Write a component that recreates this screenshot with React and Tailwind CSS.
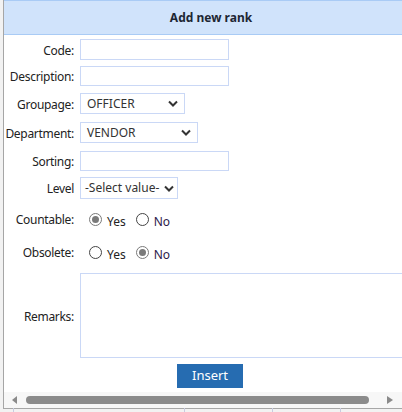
import React from 'react';

const font = { fontFamily: '"Noto Sans", "Open Sans", Arial, sans-serif' };

const Chevron = () => (
  <svg width="10" height="7" viewBox="0 0 10 7" className="shrink-0">
    <path d="M1 1.5 L5 5.5 L9 1.5" fill="none" stroke="#333" strokeWidth="2" />
  </svg>
);

const TextBox = ({ width = 'w-[149px]', height = 'h-[21px]' }) => (
  <div className={`${width} ${height} border border-[#cad8f6] bg-white`} />
);

const Select = ({ value, width }) => (
  <div className={`${width} h-[21px] border border-[#cad8f6] bg-white flex items-center justify-between pl-[6px] pr-[6px] text-[12px] text-[#333]`}>
    <span>{value}</span>
    <Chevron />
  </div>
);

const Radio = ({ checked }) => (
  <span className={`w-[13px] h-[13px] rounded-full border flex items-center justify-center shrink-0 ${checked ? 'border-[#7a7a7a]' : 'border-[#444]'}`}>
    {checked && <span className="w-[7px] h-[7px] rounded-full bg-[#7a7a7a]" />}
  </span>
);

const RadioPair = ({ yes }) => (
  <div className="flex items-center h-[20px] text-[12px] text-[#222] pl-[9px]">
    <Radio checked={yes} />
    <span className="ml-[5px] relative top-[3px]">Yes</span>
    <span className="ml-[10px]"><Radio checked={!yes} /></span>
    <span className="ml-[5px] relative top-[3px] text-[#2d1a4a]">No</span>
  </div>
);

const Row = ({ label, className = '', children }) => (
  <div className={`flex items-center ${className}`}>
    <div className="w-[70px] text-right text-[12px] text-[#222] tracking-[-0.3px] relative top-[1px]">{label}</div>
    <div className="ml-[6px]">{children}</div>
  </div>
);

export default function App() {
  return (
    <div className="w-[402px] h-[412px] bg-[#f2f2f2] overflow-hidden relative" style={font}>
      <div className="absolute left-[13px] top-[408px] w-px h-[4px] bg-[#c8cbe0]" />
      <div className="absolute left-[184px] top-[408px] w-px h-[4px] bg-[#c8cbe0]" />
      <div className="absolute left-[272px] top-[408px] w-px h-[4px] bg-[#c8cbe0]" />
      <div className="absolute left-[340px] top-[408px] w-px h-[4px] bg-[#c8cbe0]" />

      <div className="ml-[3px] w-[415px] h-[409px] bg-white border-l border-b border-[#a6a6a6] flex flex-col">
        <div className="h-[35px] shrink-0 bg-[#d0e3fb] border-t border-b border-[#a9cbf5] flex items-center justify-center text-[12px] font-bold text-[#1d2633]">
          Add new rank
        </div>

        <Row label="Code:" className="mt-[4px]"><TextBox /></Row>
        <Row label="Description:" className="mt-[6px]"><TextBox height="h-[20px]" /></Row>
        <Row label="Groupage:" className="mt-[7px]"><Select value="OFFICER" width="w-[105px]" /></Row>
        <Row label="Department:" className="mt-[8px]"><Select value="VENDOR" width="w-[118px]" /></Row>
        <Row label="Sorting:" className="mt-[8px]"><TextBox height="h-[20px]" /></Row>
        <Row label="Level" className="mt-[6px]">
          <div className="w-[98px] h-[22px] border border-[#cad8f6] bg-white flex items-center justify-between pl-[4px] pr-[3px] text-[12px] text-[#333]">
            <span>-Select value-</span>
            <Chevron />
          </div>
        </Row>
        <Row label="Countable:" className="mt-[10px] h-[20px]"><RadioPair yes /></Row>
        <Row label="Obsolete:" className="mt-[13px] h-[20px]"><RadioPair yes={false} /></Row>
        <Row label="Remarks:" className="mt-[11px]">
          <div className="w-[330px] h-[85px] border border-[#cad8f6] bg-white" />
        </Row>

        <div className="mt-[6px] pl-[173px]">
          <button className="w-[66px] h-[24px] bg-[#266cb1] text-white text-[13px] flex items-center justify-center">
            Insert
          </button>
        </div>

        <div className="mt-[4px] h-[16px] w-[399px] bg-[#f7f7f7] flex items-center">
          <svg width="6" height="8" viewBox="0 0 6 8" className="ml-[8px]">
            <path d="M5 0 L0 4 L5 8 Z" fill="#8a8a8a" />
          </svg>
          <div className="ml-[8px] w-[343px] h-[8px] rounded-full bg-[#8b8b8b]" />
          <svg width="6" height="8" viewBox="0 0 6 8" className="ml-[18px]">
            <path d="M0 0 L6 4 L0 8 Z" fill="#8a8a8a" />
          </svg>
        </div>
      </div>
    </div>
  );
}
